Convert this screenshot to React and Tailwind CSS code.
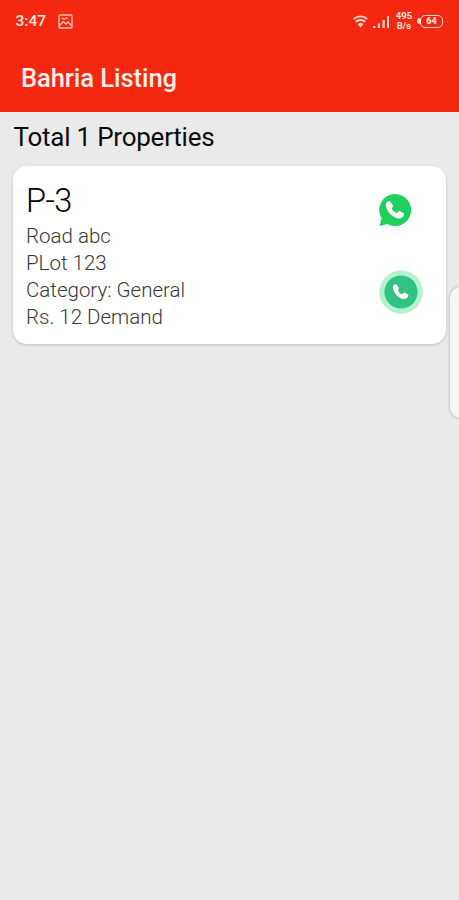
import React from 'react';

const properties = [
  {
    id: 'P-3',
    lines: ['Road abc', 'PLot 123', 'Category: General', 'Rs. 12 Demand'],
  },
];

const handset =
  'M2.5.9C3.6.2 4.6.2 5.3 1.2L7.6 5C8.1 5.9 7.8 6.5 6.9 7.4C6.4 7.9 6.4 8.3 6.8 8.9C8 10.8 9.6 12.1 11.3 12.8C11.9 13 12.3 12.8 12.7 12.3L13.6 11.3C14.1 10.7 14.7 10.7 15.3 11L18.8 12.9C19.6 13.4 19.7 13.9 19.4 14.8C18.8 16.9 17.2 18.4 15 18.7C12.1 19 8.1 17.3 5.2 14.3C2.4 11.5.3 7.6.3 4.7C.3 3 1.2 1.7 2.5.9Z';

const ImageIcon = () => (
  <svg className="h-[15px] w-[15px] text-[#ffc0ad]" viewBox="0 0 15 15" fill="none" stroke="currentColor" strokeWidth="1.4">
    <rect x="1" y="1" width="13" height="13" rx="1.2" />
    <path d="M1.5 11.8L5.2 7.6L8 10L10 8L13.5 11.8M3.6 4.2L6.4 5L9.8 3.6" />
  </svg>
);

const WifiIcon = () => (
  <svg className="h-[13px] w-[15px] text-[#ffd8cc]" viewBox="0 0 15 13" fill="none" stroke="currentColor" strokeWidth="1.9">
    <path d="M.8 4C4.6.5 10.4.5 14.2 4" />
    <path d="M2.8 6.8C5.4 4.3 9.6 4.3 12.2 6.8" />
    <path d="M4.6 9.2C6.3 7.6 8.7 7.6 10.4 9.2L7.5 12.5Z" fill="currentColor" stroke="none" />
  </svg>
);

const SignalIcon = () => (
  <svg className="h-[13px] w-[17px] text-[#ffd8cc]" viewBox="0 0 17 13" fill="currentColor">
    <rect x="0" y="11" width="2.5" height="2" />
    <rect x="4.8" y="8.5" width="2.2" height="4.5" />
    <rect x="9.5" y="5" width="2.2" height="8" />
    <rect x="14" y="1" width="2" height="12" />
  </svg>
);

const StatusBar = () => (
  <div className="flex h-[42px] items-center text-[#ffe6de]">
    <span className="ml-[15.5px] w-[42.5px] pt-[2px] text-[15.5px] font-medium leading-none">3:47</span>
    <ImageIcon />
    <div className="ml-auto mr-[16px] flex items-center">
      <WifiIcon />
      <div className="ml-[5px]">
        <SignalIcon />
      </div>
      <div className="ml-[5px] w-[18px] text-center text-[9.5px] font-bold leading-[10px]">
        <div>495</div>
        <div>B/s</div>
      </div>
      <div className="ml-[4px] h-[6px] w-[3px] rounded-l-sm bg-[#ffd8cc]" />
      <div className="flex h-[13px] w-[23px] items-center justify-center rounded-[5px] border-[1.5px] border-[#ffd8cc] text-[9px] font-black leading-none">
        64
      </div>
    </div>
  </div>
);

const WhatsAppIcon = () => (
  <svg className="h-[34px] w-[34px]" viewBox="0 0 34 34">
    <path d="M17.2 1A16 16 0 1 1 9.4 31L1.6 33L3.6 25.3A16 16 0 0 1 17.2 1Z" fill="#20d05c" />
    <path d={handset} fill="#fff" transform="translate(7.5 7.7) scale(.95)" />
  </svg>
);

const CallIcon = () => (
  <svg className="h-[44px] w-[44px]" viewBox="0 0 44 44">
    <circle cx="22" cy="22" r="21.7" fill="#b5f2d0" />
    <circle cx="22" cy="22" r="16.6" fill="#32c283" />
    <path d={handset} fill="#fff" transform="translate(13.6 13.8) scale(.81)" />
  </svg>
);

const PropertyCard = ({ property }) => (
  <div className="mx-[13px] flex h-[178px] justify-between rounded-[14px] bg-white pl-[13px] shadow-[0_1px_3px_rgba(0,0,0,0.2)]">
    <div className="pt-[16px] font-light">
      <h2 className="mb-[2.5px] text-[32.5px] leading-[38px] tracking-[-0.5px] text-black">{property.id}</h2>
      {property.lines.map((line) => (
        <p key={line} className="text-[20.5px] leading-[27.3px] text-[#383838]">
          {line}
        </p>
      ))}
    </div>
    <div className="flex w-[68px] flex-col pt-[27px]">
      <button type="button" className="h-[34px] w-[34px]" aria-label="WhatsApp">
        <WhatsAppIcon />
      </button>
      <button type="button" className="ml-px mt-[43px] h-[44px] w-[44px]" aria-label="Call">
        <CallIcon />
      </button>
    </div>
  </div>
);

const App = () => (
  <div className="relative h-[900px] w-full overflow-hidden bg-[#eaeaea] font-[Roboto,sans-serif]">
    <header className="h-[112px] bg-[#f42810]">
      <StatusBar />
      <h1 className="ml-[21px] pt-[20px] text-[25.5px] font-medium leading-[32px] tracking-[-0.05px] text-[#fff0eb]">
        Bahria Listing
      </h1>
    </header>
    <p className="ml-[13.5px] h-[54px] pt-[9px] text-[26px] leading-[32px] tracking-[-0.24px] text-[#0c0c0c]">
      Total {properties.length} Properties
    </p>
    {properties.map((property) => (
      <PropertyCard key={property.id} property={property} />
    ))}
    {/* edge panel handle */}
    <div className="absolute -right-[14px] top-[286px] h-[133px] w-[24px] rounded-[14px] border border-[#d4d4d4] bg-[#f5f5f5] shadow-[0_0_2px_rgba(0,0,0,0.2)]" />
  </div>
);

export default App;
